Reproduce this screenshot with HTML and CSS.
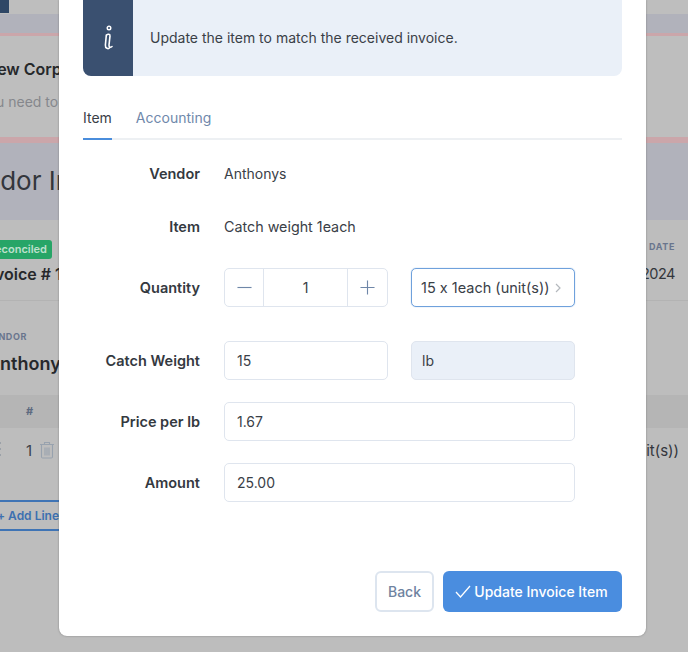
FILE: index.html
```html
<!DOCTYPE html>
<html lang="en">
<head>
<meta charset="utf-8">
<title>Update Invoice Item</title>
<link rel="stylesheet" href="styles.css">
</head>
<body>
<div class="page">
  <div class="nav"><span class="nav-block"></span></div>
  <div class="strip"></div>
  <div class="alert-banner">
    <div class="bg-title">New Corp</div>
    <div class="bg-sub">you need to</div>
  </div>
  <div class="head"><div class="bg-h1">Vendor Invoice</div></div>
  <div class="summary">
    <div class="summary-row">
      <div class="status-col"><span class="status">Reconciled</span><div class="bg-inv">Invoice # 1</div></div>
      <div class="date-col"><div class="bg-label">DATE</div><div class="bg-date">2024</div></div>
    </div>
  </div>
  <div class="vendor">
    <div class="bg-label">VENDOR</div>
    <div class="bg-vendor">Anthonys</div>
  </div>
  <div class="table-head"><span class="bg-hash">#</span></div>
  <div class="table-row">
    <span class="bg-handle"></span>
    <span class="bg-num">1</span>
    <svg class="bg-trash" viewBox="0 0 16 18" width="16" height="18" aria-hidden="true"><path d="M1 3.500h14M5.500 3.500V1.500h5v2M2.500 3.500V16a1.200 1.200 0 0 0 1.200 1h8.600a1.200 1.200 0 0 0 1.200-1V3.500M6 6.500v8M8 6.500v8M10 6.500v8" fill="none" stroke="#98a2ae" stroke-width="1.100"/></svg>
    <span class="bg-unit">(unit(s))</span>
  </div>
  <div class="add-wrap"><span class="add-line">+ Add Line</span></div>
</div>

<div class="modal">
  <div class="notice">
    <div class="notice-icon">
      <svg viewBox="0 0 12 26" width="12" height="26" aria-hidden="true"><circle cx="7" cy="3" r="1.800" fill="none" stroke="#fff" stroke-width="1.400"/><path d="M4.300 10.200c1.700-1.400 3.900-1.200 3.700.9L7 20c-.2 2 1.300 2.900 3 1.500M4.300 10.200 3.400 20c-.3 3.700 3 4.300 4.200 2.800" fill="none" stroke="#fff" stroke-width="1.600" stroke-linecap="round"/></svg>
    </div>
    <div class="notice-text">Update the item to match the received invoice.</div>
  </div>
  <div class="tabs">
    <div class="tab tab-active">Item</div>
    <div class="tab">Accounting</div>
  </div>
  <div class="form">
    <div class="row row-text row-vendor">
      <div class="label">Vendor</div>
      <div class="value">Anthonys</div>
    </div>
    <div class="row row-text row-item">
      <div class="label">Item</div>
      <div class="value">Catch weight 1each</div>
    </div>
    <div class="row row-qty">
      <div class="label">Quantity</div>
      <div class="stepper">
        <div class="step-btn step-minus">
          <svg viewBox="0 0 16 16" width="15" height="15" aria-hidden="true"><path d="M0.500 8h15" stroke="#6f87a8" stroke-width="1.200"/></svg>
        </div>
        <div class="step-value">1</div>
        <div class="step-btn">
          <svg viewBox="0 0 16 16" width="15" height="15" aria-hidden="true"><path d="M0.500 8h15M8 0.500v15" stroke="#6f87a8" stroke-width="1.200" fill="none"/></svg>
        </div>
      </div>
      <div class="field field-select">
        <span>15 x 1each (unit(s))</span>
        <svg viewBox="0 0 6 10" width="6" height="10" aria-hidden="true"><path d="M1 1l4 4-4 4" fill="none" stroke="#b4b8bd" stroke-width="1.200"/></svg>
      </div>
    </div>
    <div class="row row-catch">
      <div class="label">Catch Weight</div>
      <div class="field field-half">15</div>
      <div class="field field-half field-muted">lb</div>
    </div>
    <div class="row row-price">
      <div class="label">Price per lb</div>
      <div class="field field-wide">1.67</div>
    </div>
    <div class="row row-amount">
      <div class="label">Amount</div>
      <div class="field field-wide">25.00</div>
    </div>
  </div>
  <div class="actions">
    <div class="btn btn-back">Back</div>
    <div class="btn btn-primary">
      <svg viewBox="0 0 16 13" width="16" height="13" aria-hidden="true"><path d="M1 7l4.500 5L15 1" fill="none" stroke="#fff" stroke-width="1.300"/></svg>
      <span>Update Invoice Item</span>
    </div>
  </div>
</div>
</body>
</html>
```
FILE: styles.css
```css
* { box-sizing: border-box; }
html, body { margin: 0; padding: 0; }
body {
  width: 688px;
  height: 652px;
  overflow: hidden;
  position: relative;
  font-family: "Inter", "Liberation Sans", sans-serif;
  font-feature-settings: "calt" 0;
  color: #34393f;
  background: #bdbdbd;
}
.page { width: 688px; height: 652px; overflow: hidden; }
.nav { height: 14px; background: #bebebe; }
.nav-block { display: block; width: 9px; height: 13px; background: #2f4766; }
.strip { height: 19px; background: #b1b2bb; }
.alert-banner {
  height: 110px;
  background: #bebebe;
  border-top: 3px solid #cba6aa;
  border-bottom: 6px solid #cba6aa;
  padding: 23px 0 0 0;
}
.bg-title { font-size: 16px; font-weight: 600; color: #26282b; margin-left: -15px; line-height: 20px; white-space: nowrap; }
.bg-sub { font-size: 14px; color: #85878c; margin-left: -20px; margin-top: 13px; line-height: 20px; white-space: nowrap; }
.head { height: 77px; background: #b1b2bb; padding-top: 23px; }
.bg-h1 { font-size: 26px; line-height: 30px; color: #33363c; margin-left: -47px; white-space: nowrap; }
.summary { height: 81px; border-bottom: 1px solid #b3b3b3; padding-top: 20px; }
.summary-row { display: flex; justify-content: space-between; }
.status {
  display: flex;
  justify-content: flex-end;
  width: 52px;
  height: 19px;
  background: #27a567;
  border-radius: 0 3px 3px 0;
  color: #bde0cd;
  font-size: 11px;
  font-weight: 600;
  line-height: 19px;
  padding-right: 5px;
  overflow: hidden;
  white-space: nowrap;
}
.bg-inv { font-size: 16px; font-weight: 600; color: #26282b; margin-left: -19px; margin-top: 5px; line-height: 20px; white-space: nowrap; }
.date-col { padding-right: 13px; text-align: right; }
.bg-label { font-size: 9px; font-weight: 700; color: #69758d; letter-spacing: .6px; line-height: 14px; }
.bg-date { font-size: 14.500px; letter-spacing: -.5px; color: #33363c; margin-top: 10px; line-height: 20px; }
.vendor { height: 94px; padding-top: 29px; overflow: hidden; }
.vendor .bg-label { margin-left: -15px; }
.bg-vendor { font-size: 18px; font-weight: 600; color: #26282b; margin-left: -13px; line-height: 24px; margin-top: 8px; white-space: nowrap; }
.table-head { height: 33px; background: #b5b5b5; padding: 9px 0 0 26px; line-height: 14px; }
.bg-hash { font-size: 11px; font-weight: 700; color: #5d6a80; display: block; }
.table-row {
  height: 44px;
  display: flex;
  align-items: center;
  padding-left: 26px;
  gap: 5px;
  position: relative;
}
.bg-handle {
  position: absolute;
  left: -1px;
  top: 14px;
  width: 2px;
  height: 16px;
  background: repeating-linear-gradient(#9ba1a8 0 2px, transparent 2px 6px);
}
.bg-num { font-size: 15px; color: #3c4148; width: 8px; }
.bg-unit { margin-left: auto; margin-right: 9px; font-size: 15px; color: #33363c; white-space: nowrap; }
.add-wrap { padding-top: 28px; }
.add-line {
  display: flex;
  justify-content: flex-end;
  width: 64px;
  height: 31px;
  border-top: 2px solid #3f74b5;
  border-bottom: 2px solid #3f74b5;
  color: #3c70b0;
  font-size: 12px;
  font-weight: 600;
  line-height: 27px;
  padding-right: 5px;
  white-space: nowrap;
  overflow: hidden;
}

.modal {
  position: absolute;
  left: 59px;
  top: 0;
  width: 587px;
  height: 636px;
  background: #fff;
  border-radius: 0 0 8px 8px;
  box-shadow: 0 0 2px rgba(70,70,70,.55);
  padding: 0 24px 0 24px;
  display: flex;
  flex-direction: column;
}
.notice {
  height: 76px;
  display: flex;
  border-radius: 0 0 8px 8px;
  background: #eaf0f8;
  overflow: hidden;
  flex: none;
}
.notice-icon {
  width: 50px;
  background: #3a5070;
  display: flex;
  align-items: center;
  justify-content: center;
}
.notice-text {
  padding-left: 17px;
  font-size: 14px;
  line-height: 76px;
  color: #3a4047;
}
.tabs {
  display: flex;
  gap: 24px;
  height: 64px;
  padding-top: 32px;
  border-bottom: 2px solid #edf0f3;
  flex: none;
}
.tab { font-size: 14px; line-height: 20px; color: #6f88ab; height: 32px; padding-bottom: 10px; }
.tab-active { color: #3a4047; border-bottom: 2px solid #4a8ddc; }
.form { display: flex; flex-direction: column; flex: none; }
.row { display: flex; align-items: center; }
.label { width: 117px; text-align: right; font-size: 14.500px; font-weight: 600; color: #34393f; flex: none; margin-right: 24px; white-space: nowrap; }
.value { font-size: 14px; color: #3a4047; }
.row-item .value { font-size: 14.300px; }
.row-vendor { margin-top: 23px; height: 20px; }
.row-item { margin-top: 33px; height: 20px; }
.row-qty { margin-top: 32px; height: 39px; }
.row-catch { margin-top: 34px; height: 39px; }
.row-price { margin-top: 22px; height: 39px; }
.row-amount { margin-top: 22px; height: 39px; }
.stepper {
  width: 164px;
  height: 39px;
  border: 1px solid #dfe5ee;
  border-radius: 5px;
  display: flex;
  flex: none;
}
.step-btn { width: 39px; display: flex; align-items: center; justify-content: center; flex: none; }
.step-minus { width: 38px; }
.step-value { flex: 1; border-left: 1px solid #dfe5ee; border-right: 1px solid #dfe5ee; text-align: center; font-size: 14px; line-height: 37px; color: #3a4047; }
.field {
  height: 39px;
  border: 1px solid #dfe5ee;
  border-radius: 5px;
  font-size: 14px;
  line-height: 37px;
  padding-left: 12px;
  color: #3a4047;
  flex: none;
  white-space: nowrap;
}
.field-half { width: 164px; }
.field-muted { background: #eaf0f8; margin-left: 23px; padding-left: 10px; }
.field-wide { width: 351px; }
.field-select {
  width: 164px;
  margin-left: 23px;
  border-color: #6fa1dc;
  box-shadow: 0 0 1px #6fa1dc;
  padding-left: 9px;
  font-size: 14.500px;
  display: flex;
  align-items: center;
  gap: 5px;
}
.actions { margin-top: auto; display: flex; justify-content: flex-end; gap: 9px; padding-bottom: 24px; }
.btn { height: 41px; border-radius: 6px; font-size: 14px; font-weight: 500; display: flex; align-items: center; justify-content: center; }
.btn-back { width: 59px; border: 2px solid #dde5ef; color: #6f83a0; background: #fff; }
.btn-primary { width: 179px; background: #4a8ddf; color: #fff; gap: 3px; padding-right: 2px; }
```
